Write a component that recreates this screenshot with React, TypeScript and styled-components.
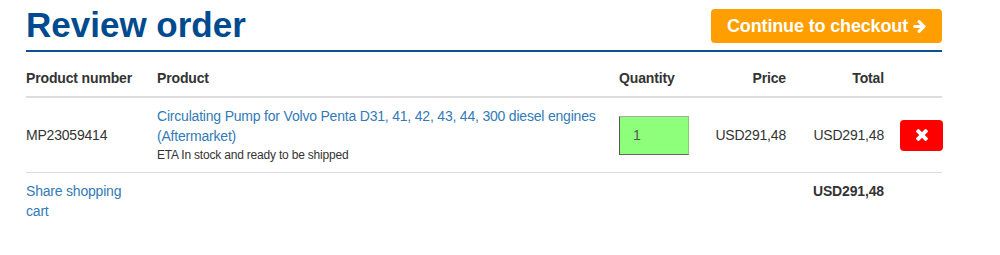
import React from "react";
import styled, { createGlobalStyle } from "styled-components";

const GlobalStyle = createGlobalStyle`
  html, body {
    margin: 0;
    padding: 0;
    background: #ffffff;
  }
  body {
    font-family: "Liberation Sans", Arial, Helvetica, sans-serif;
    font-size: 14px;
    line-height: 20px;
    letter-spacing: -0.2px;
    color: #333333;
  }
`;

const Page = styled.div`
  width: 916px;
  padding-left: 26px;
`;

const Header = styled.header`
  display: flex;
  justify-content: space-between;
  align-items: flex-start;
  padding: 4px 0 5px;
  border-bottom: 2px solid #0b4f94;
`;

const Title = styled.h1`
  margin: 0;
  font-size: 35px;
  line-height: 41px;
  font-weight: 700;
  letter-spacing: 0;
  color: #004a8f;
`;

const CheckoutButton = styled.button`
  display: flex;
  align-items: center;
  gap: 5px;
  margin-top: 5px;
  padding: 6px 16px;
  border: none;
  border-radius: 4px;
  background: #ff9e00;
  color: #ffffff;
  font-family: "Liberation Sans", Arial, sans-serif;
  font-size: 18px;
  line-height: 22px;
  font-weight: 700;
  letter-spacing: -0.15px;
  cursor: pointer;
`;

const Table = styled.table`
  width: 916px;
  margin-top: 8px;
  table-layout: fixed;
  border-collapse: collapse;
`;

const HeadCell = styled.th<{ $align?: "left" | "right" }>`
  padding: 8px;
  text-align: ${(p) => p.$align ?? "left"};
  font-weight: 700;
  letter-spacing: -0.15px;
  color: #333333;
  border-bottom: 2px solid #dddddd;
  &:first-child { padding-left: 0; }
  &:last-child { padding-right: 0; }
`;

const BodyRow = styled.tr<{ $divider?: boolean }>`
  border-bottom: ${(p) => (p.$divider ? "1px solid #dddddd" : "none")};
`;

const Cell = styled.td<{ $align?: "left" | "right"; $valign?: "top" | "middle" }>`
  padding: 8px;
  text-align: ${(p) => p.$align ?? "left"};
  vertical-align: ${(p) => p.$valign ?? "middle"};
  color: #333333;
  &:first-child { padding-left: 0; }
  &:last-child { padding-right: 0; }
`;

const Link = styled.a`
  color: #337ab7;
  text-decoration: none;
  cursor: pointer;
`;

const Eta = styled.div`
  font-size: 12px;
  line-height: 18px;
  letter-spacing: -0.2px;
  color: #333333;
`;

const QtyInput = styled.input`
  box-sizing: border-box;
  width: 70px;
  height: 39px;
  padding: 0 0 0 13px;
  margin: 0;
  background: #8dff7a;
  border-style: solid;
  border-width: 1px;
  border-color: #a9a9a9 #7fcf70 #5f6a5c #555555;
  font-family: "Liberation Sans", Arial, sans-serif;
  font-size: 14px;
  color: #555555;
  outline: none;
`;

const DeleteButton = styled.button`
  display: inline-flex;
  align-items: center;
  justify-content: center;
  width: 43px;
  height: 31px;
  padding: 0;
  border: none;
  border-radius: 4px;
  background: #ff0000;
  cursor: pointer;
  vertical-align: middle;
`;

const TotalText = styled.strong`
  font-weight: 700;
  letter-spacing: -0.15px;
  color: #333333;
`;

const ArrowIcon = () => (
  <svg width="13" height="13" viewBox="128 181 1472 1558" aria-hidden="true">
    <path
      fill="#ffffff"
      d="M1600 960q0 54-37 91l-651 651q-39 37-91 37-51 0-90-37l-75-75q-38-38-38-91t38-91l293-293h-704q-52 0-84.5-37.5t-32.5-90.5v-128q0-53 32.5-90.5t84.5-37.5h704l-293-294q-38-36-38-90t38-90l75-75q38-38 90-38 53 0 91 38l651 651q37 35 37 90z"
    />
  </svg>
);

const TimesIcon = () => (
  <svg width="12" height="12" viewBox="302 366 1188 1188" aria-hidden="true">
    <path
      fill="#ffffff"
      d="M1490 1322q0 40-28 68l-136 136q-28 28-68 28t-68-28l-294-294-294 294q-28 28-68 28t-68-28l-136-136q-28-28-28-68t28-68l294-294-294-294q-28-28-28-68t28-68l136-136q28-28 68-28t68 28l294 294 294-294q28-28 68-28t68 28l136 136q28 28 28 68t-28 68l-294 294 294 294q28 28 28 68z"
    />
  </svg>
);

export default function App() {
  return (
    <>
      <GlobalStyle />
      <Page>
        <Header>
          <Title>Review order</Title>
          <CheckoutButton>
            Continue to checkout
            <ArrowIcon />
          </CheckoutButton>
        </Header>
        <Table>
          <colgroup>
            <col style={{ width: 123 }} />
            <col style={{ width: 462 }} />
            <col style={{ width: 88 }} />
            <col style={{ width: 95 }} />
            <col style={{ width: 98 }} />
            <col style={{ width: 50 }} />
          </colgroup>
          <thead>
            <tr>
              <HeadCell>Product number</HeadCell>
              <HeadCell>Product</HeadCell>
              <HeadCell>Quantity</HeadCell>
              <HeadCell $align="right">Price</HeadCell>
              <HeadCell $align="right">Total</HeadCell>
              <HeadCell />
            </tr>
          </thead>
          <tbody>
            <BodyRow $divider>
              <Cell>MP23059414</Cell>
              <Cell>
                <Link>
                  Circulating Pump for Volvo Penta D31, 41, 42, 43, 44, 300 diesel engines (Aftermarket)
                </Link>
                <Eta>ETA In stock and ready to be shipped</Eta>
              </Cell>
              <Cell>
                <QtyInput defaultValue="1" />
              </Cell>
              <Cell $align="right">USD291,48</Cell>
              <Cell $align="right">USD291,48</Cell>
              <Cell $align="right">
                <DeleteButton aria-label="Remove">
                  <TimesIcon />
                </DeleteButton>
              </Cell>
            </BodyRow>
            <BodyRow>
              <Cell $valign="top">
                <Link>Share shopping cart</Link>
              </Cell>
              <Cell />
              <Cell />
              <Cell />
              <Cell $align="right" $valign="top">
                <TotalText>USD291,48</TotalText>
              </Cell>
              <Cell />
            </BodyRow>
          </tbody>
        </Table>
      </Page>
    </>
  );
}
